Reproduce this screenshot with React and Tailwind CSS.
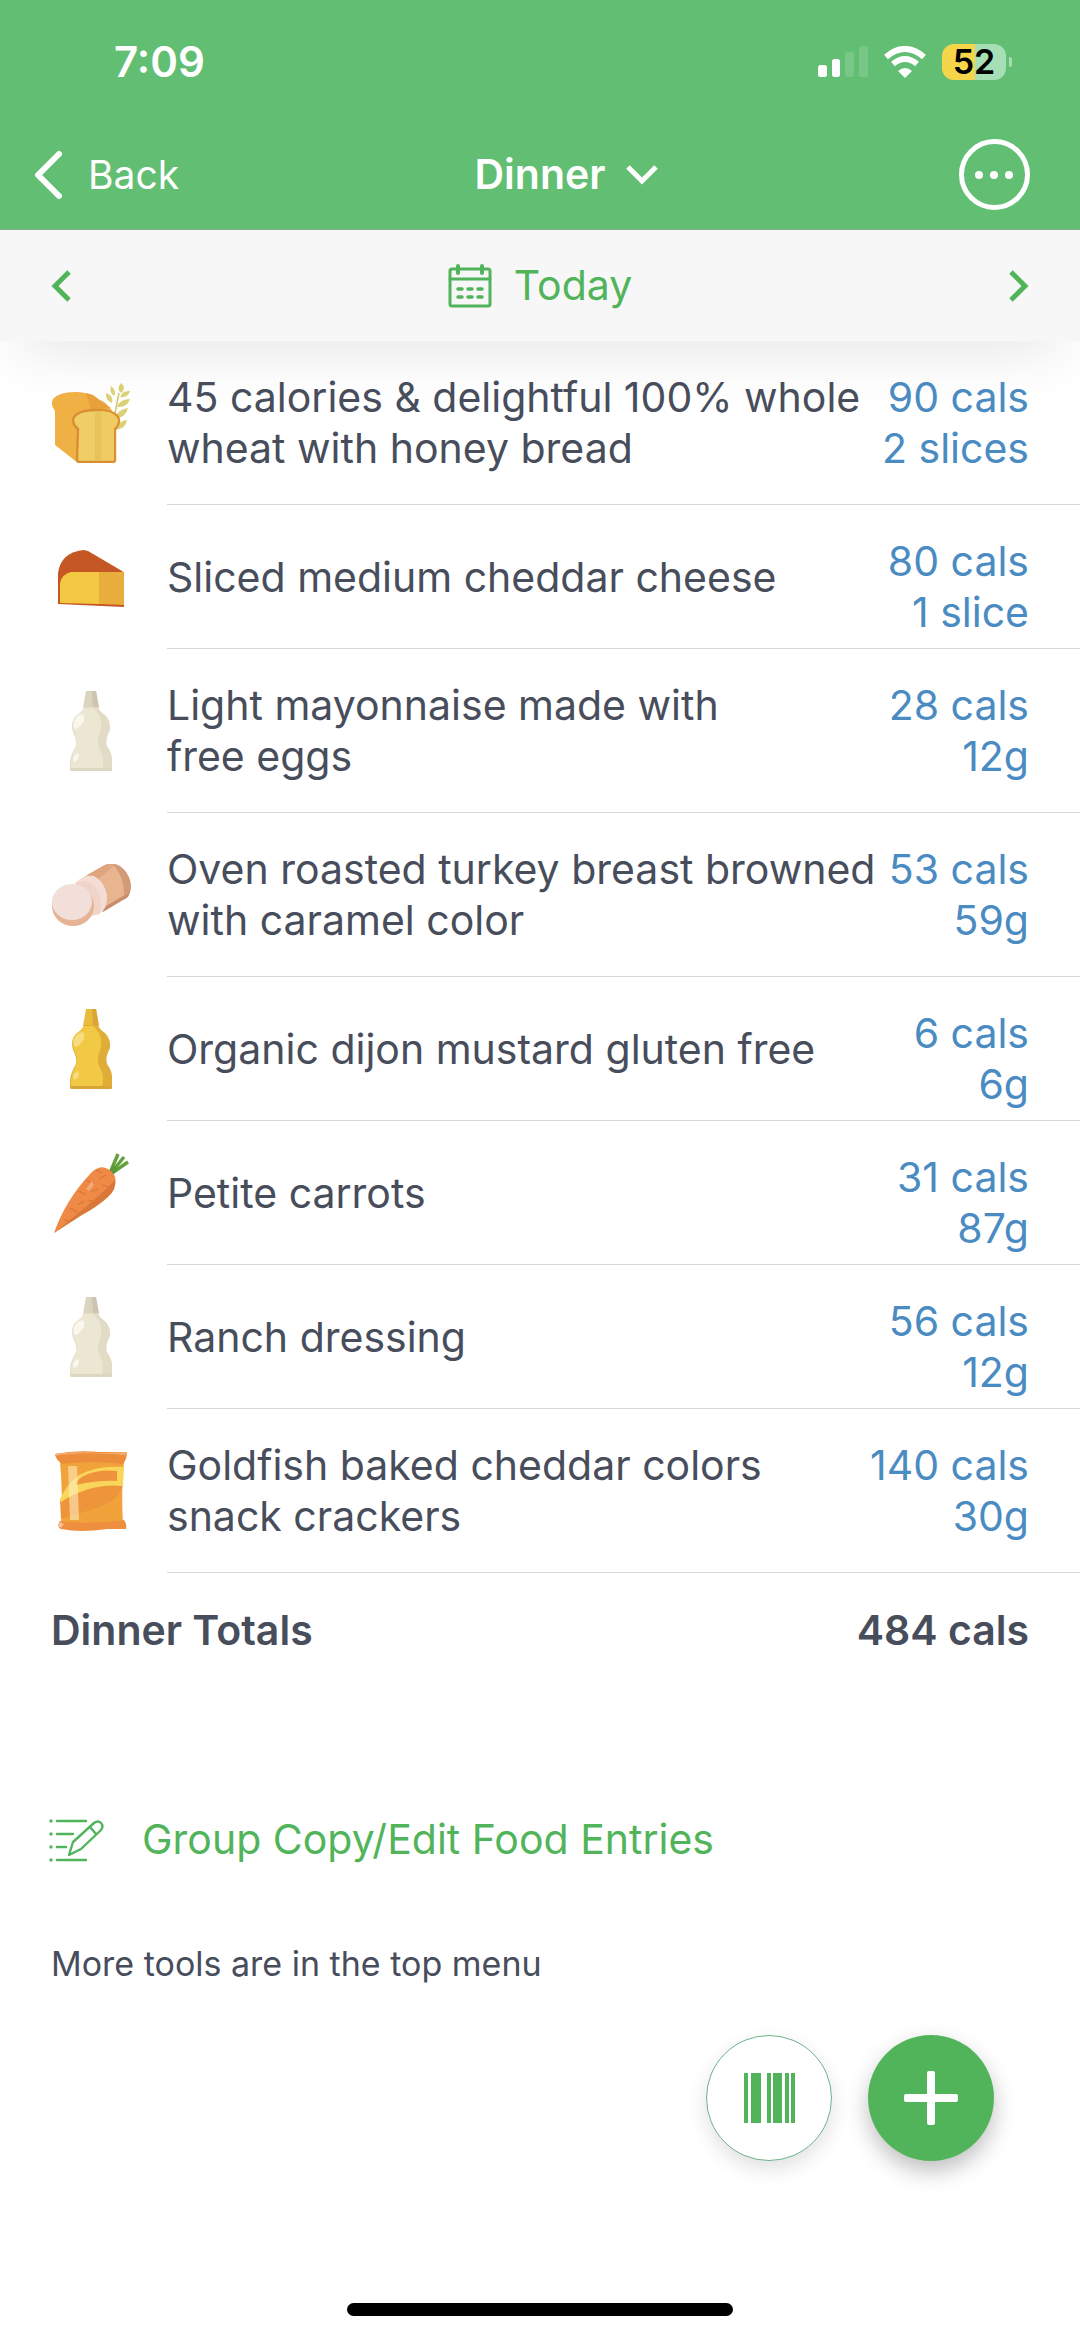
import React from 'react';

const BreadIcon = () => (
  <svg viewBox="0 0 80 80" className="w-20 h-20" aria-hidden="true">
    <path d="M62 40 L68 10" stroke="#cfc56a" strokeWidth="1.5" />
    <g fill="#dcd077">
      <path d="M70 0 Q76 5 70 10 Q65 6 70 0Z" />
      <path d="M60 3 Q66 8 63 13 Q58 9 60 3Z" />
      <path d="M69 14 Q72 7 79 8 Q77 15 69 14Z" />
      <path d="M55 10 Q63 13 61 20 Q54 17 55 10Z" />
      <path d="M66 24 Q69 16 79 16 Q76 25 66 24Z" />
      <path d="M50 17 Q58 20 59 30 Q49 27 50 17Z" />
      <path d="M64 35 Q67 26 77 25 Q75 35 64 35Z" />
      <path d="M65 47 Q68 37 76 37 Q75 45 65 47Z" />
    </g>
    <path d="M4 28 Q-1 22 2 16 Q8 9 24 9 Q36 9 44 14 L60 26 L66 36 L60 78 L27 80 L4 62Z" fill="#efb044" />
    <path d="M35 10 Q42 11 46 15 L60 25 L40 27Z" fill="#e8a03a" />
    <path d="M27 46 Q20 40 23 34 Q28 27 45 27 Q62 27 67 34 Q70 40 64 46 L64 77 Q64 79 62 79 L29 79 Q26 79 26 77Z" fill="#efce68" stroke="#da8f32" strokeWidth="2.4" />
    <path d="M44 28 H50 V78 H44Z" fill="#e9c25b" />
    <path d="M50 28 Q62 28 66 35 Q68 40 63 45 L63 77 L50 77Z" fill="#f0cb62" />
  </svg>
);

const CheeseIcon = () => (
  <svg viewBox="0 0 80 80" className="w-20 h-20" aria-hidden="true">
    <path d="M7 67 V36 Q10 15 33 13 L37 14 L71 34 L73 36 V70Z" fill="#c45723" />
    <path d="M9 66 V46 Q11 37 20 35 L48 35 V67Z" fill="#f4c843" />
    <path d="M48 35 H73 V68 L48 67Z" fill="#e9ad3e" />
  </svg>
);

const BottleIcon = ({ cap, capShade, body, shade, base, shine }) => (
  <svg viewBox="0 0 80 80" className="w-20 h-20" aria-hidden="true">
    <path d="M35 0 H45 L48 17 H32Z" fill={cap} />
    <path d="M41 0 H45 L48 17 H42Z" fill={capShade} />
    <path d="M33 16 H47 Q48 20 54 24 Q60 30 59 39 Q54 48 56 55 Q62 63 61 71 V78 Q61 80 59 80 H21 Q19 80 19 78 V71 Q20 63 25 55 Q26 48 22 41 Q19 31 25 25 Q32 20 33 16Z" fill={shade} />
    <path d="M33 17 H42 Q48 22 50 30 Q51 38 47 47 Q46 54 51 63 Q53 71 51 78 H20 V71 Q21 63 25 56 Q27 48 23 41 Q19 31 25 25 Q32 20 33 17Z" fill={body} />
    <path d="M19 77 H61 V79 Q61 80 59 80 H21 Q19 80 19 78Z" fill={base} />
    <path d="M24 38 Q20 32 26 26 Q30 22 33 24 Q34 30 30 34 Q27 38 24 38Z" fill={shine} />
    <path d="M22 69 Q22 64 27 62 Q29 66 26 69 Q24 72 22 69Z" fill={shine} />
  </svg>
);

const CreamBottle = () => (
  <BottleIcon cap="#dbd4c0" capShade="#cdc5b0" body="#ece7d3" shade="#e2dcc7" base="#ddd6c0" shine="#f9f7ee" />
);

const MustardBottle = () => (
  <BottleIcon cap="#e9bb3c" capShade="#daa536" body="#f2c945" shade="#e0ad38" base="#d9a636" shine="#f8dc83" />
);

const TurkeyIcon = () => (
  <svg viewBox="0 0 80 80" className="w-20 h-20" aria-hidden="true">
    <path d="M30 24 L54 10 Q66 6 75 17 Q83 29 78 40 Q77 43 72 45 L52 57Z" fill="#c98d6b" />
    <path d="M30 24 L54 10 Q66 6 74 17 Q81 29 77 38 L55 51Z" fill="#e9b590" />
    <path d="M36 20 L54 10 Q60 8 64 10 L48 24Z" fill="#dfa580" />
    <path d="M62 9 Q70 9 75 18 Q80 27 78 37 L73 40 Q74 24 62 9Z" fill="#d39a77" />
    <path d="M24 28 Q33 19 43 21 Q53 26 56 40 Q57 54 48 59 L40 60Z" fill="#f3ddd4" />
    <path d="M24 28 Q35 22 45 33 Q52 44 49 59 L40 61Z" fill="#f0d4c9" />
    <ellipse cx="22" cy="51" rx="21" ry="20" fill="#e6b395" />
    <ellipse cx="21" cy="47" rx="20" ry="18" fill="#f2dfda" />
  </svg>
);

const CarrotIcon = () => (
  <svg viewBox="0 0 80 80" className="w-20 h-20" aria-hidden="true">
    <g stroke="#62a13c" strokeWidth="3.4" fill="none">
      <path d="M59 20 L67 1" />
      <path d="M60 20 L73 4" />
      <path d="M61 20 L77 9" />
    </g>
    <path d="M57 20 L62 12 L67 16 L61 23Z" fill="#5b983a" />
    <path d="M3 80 Q14 48 39 21 Q48 11 57 16 Q68 23 63 34 Q55 48 31 61Z" fill="#ee8a45" />
    <path d="M3 80 L31 57 Q53 39 64 27 Q66 36 57 44 Q46 54 31 62Z" fill="#d97838" />
    <g stroke="#d67636" strokeWidth="1.2" fill="none">
      <path d="M45 17 L51 20" />
      <path d="M48 26 L55 22" />
      <path d="M35 27 L43 31" />
      <path d="M51 32 L58 34" />
      <path d="M40 39 L47 36" />
      <path d="M28 38 L35 42" />
      <path d="M37 47 L43 49" />
      <path d="M27 52 L33 48" />
      <path d="M19 55 L26 59" />
      <path d="M13 67 L18 68" />
    </g>
    <path d="M35 36 L41 28 L43 32 L38 38Z" fill="#f4aa78" />
  </svg>
);

const CrackersIcon = () => (
  <svg viewBox="0 0 80 80" className="w-20 h-20" aria-hidden="true">
    <path d="M9 10 H73 Q70 40 72 74 H10 Q12 44 9 10Z" fill="#f1a23a" />
    <path d="M9 48 Q35 30 72 34 Q66 50 48 56 Q30 62 10 68Z" fill="#ee943b" />
    <path d="M9 49 Q13 36 28 24 Q46 14 73 16 L72 35 Q40 32 10 51Z" fill="#f9d65a" />
    <path d="M25 34 Q25 28 37 23 Q50 18 66 20 V30 Q48 29 25 34Z" fill="#ee923c" />
    <path d="M17 15 H26 L28 69 H19Z" fill="#fff3c8" opacity="0.55" />
    <path d="M4 3 Q24 -1 48 1 L76 1 Q76 8 72 13 Q40 9 12 13 Q5 10 4 3Z" fill="#ec8d3b" />
    <path d="M4 3 Q24 0 48 2 L76 1 L75 4 Q30 0 4 5Z" fill="#f4ad70" />
    <path d="M9 70 Q40 74 73 69 Q76 73 75 78 L56 78 Q30 82 10 78 Q5 76 9 70Z" fill="#ed8f3e" />
    <path d="M9 71 Q5 75 10 77 L13 73Z" fill="#f7c092" />
  </svg>
);

const entries = [
  { id: 1, name: '45 calories & delightful 100% whole wheat with honey bread', cals: '90 cals', amount: '2 slices', Icon: BreadIcon },
  { id: 2, name: 'Sliced medium cheddar cheese', cals: '80 cals', amount: '1 slice', Icon: CheeseIcon },
  { id: 3, name: 'Light mayonnaise made with free\u00a0eggs', cals: '28 cals', amount: '12g', Icon: CreamBottle },
  { id: 4, name: 'Oven roasted turkey breast browned with caramel color', cals: '53 cals', amount: '59g', Icon: TurkeyIcon },
  { id: 5, name: 'Organic dijon mustard gluten free', cals: '6 cals', amount: '6g', Icon: MustardBottle },
  { id: 6, name: 'Petite carrots', cals: '31 cals', amount: '87g', Icon: CarrotIcon },
  { id: 7, name: 'Ranch dressing', cals: '56 cals', amount: '12g', Icon: CreamBottle },
  { id: 8, name: 'Goldfish baked cheddar colors snack crackers', cals: '140 cals', amount: '30g', Icon: CrackersIcon },
];

const StatusBar = () => (
  <div className="flex items-center justify-between h-[124px] pl-[114px] pr-[68px]">
    <span className="text-[42px] leading-[50px] font-semibold">7:09</span>
    <div className="flex items-center gap-4">
      <svg viewBox="0 0 50 32" className="w-[50px] h-8" fill="#fff" aria-hidden="true">
        <rect x="0" y="19" width="9" height="12" rx="2.5" />
        <rect x="14" y="13" width="8" height="18" rx="2.5" />
        <rect x="27" y="6" width="9" height="25" rx="2.5" opacity="0.15" />
        <rect x="41" y="0" width="9" height="31" rx="2.5" opacity="0.15" />
      </svg>
      <svg viewBox="0 0 42 32" className="w-[42px] h-8" fill="none" stroke="#fff" strokeWidth="6" aria-hidden="true">
        <path d="M2 11 Q21 -5 40 11" />
        <path d="M9 18 Q21 8 33 18" />
        <path d="M21 32 L14 25 Q21 19 28 25Z" fill="#fff" stroke="none" />
      </svg>
      <div className="flex items-center gap-[3px]">
        <div className="flex items-center justify-center w-16 h-9 rounded-xl text-black text-[34px] leading-9 font-semibold bg-linear-to-r from-[#f6d54a] from-52% to-[#a6dfb5] to-52%">
          52
        </div>
        <div className="w-[3px] h-[10px] rounded-r-full bg-[#a6dfb5]" />
      </div>
    </div>
  </div>
);

const NavBar = () => (
  <div className="grid grid-cols-3 items-center h-[105px] px-[50px] pb-1">
    <button className="flex items-center gap-[26px] justify-self-start -ml-4 text-[39px] leading-[50px]">
      <svg viewBox="0 0 28 50" className="w-7 h-[50px]" fill="none" stroke="#fff" strokeWidth="6" strokeLinecap="round" strokeLinejoin="round" aria-hidden="true">
        <path d="M25 4 L4 25 L25 46" />
      </svg>
      Back
    </button>
    <button className="flex items-center gap-5 justify-self-center pl-[52px] text-[41px] leading-[51px] font-semibold">
      Dinner
      <svg viewBox="0 0 32 20" className="w-8 h-5" fill="none" stroke="#fff" strokeWidth="5" aria-hidden="true">
        <path d="M2 2 L16 16 L30 2" />
      </svg>
    </button>
    <button aria-label="More options" className="flex items-center justify-center gap-[7px] justify-self-end w-[71px] h-[71px] rounded-full border-[5px] border-white">
      <span className="w-2 h-2 rounded-full bg-white" />
      <span className="w-2 h-2 rounded-full bg-white" />
      <span className="w-2 h-2 rounded-full bg-white" />
    </button>
  </div>
);

const DateBar = () => (
  <div className="flex items-center justify-between h-[111px] px-[51px] bg-[#f7f7f7] text-[#52b45a] shadow-[0_30px_60px_-20px_rgba(0,0,0,0.1)]">
    <button aria-label="Previous day">
      <svg viewBox="0 0 20 32" className="w-5 h-8" fill="none" stroke="currentColor" strokeWidth="5" aria-hidden="true">
        <path d="M18 2 L4 16 L18 30" />
      </svg>
    </button>
    <button className="flex items-center gap-[22px] text-[41px] leading-[51px]">
      <svg viewBox="0 0 44 44" className="w-11 h-11" fill="none" stroke="currentColor" strokeWidth="3" strokeLinecap="round" aria-hidden="true">
        <rect x="2" y="5" width="40" height="37" rx="2" />
        <path d="M2 15 H42" />
        <path d="M10 2 V9 M34 2 V9" strokeWidth="4" />
        <path d="M10 25 H14 M20 25 H24 M30 25 H34 M10 33 H14 M20 33 H24 M30 33 H34" strokeWidth="3.5" />
      </svg>
      Today
    </button>
    <button aria-label="Next day">
      <svg viewBox="0 0 20 32" className="w-5 h-8" fill="none" stroke="currentColor" strokeWidth="5" aria-hidden="true">
        <path d="M2 2 L16 16 L2 30" />
      </svg>
    </button>
  </div>
);

const EntryRow = ({ entry }) => {
  const { Icon } = entry;
  return (
    <li className="flex items-center pl-[51px]">
      <Icon />
      <div className="flex items-center flex-1 min-h-36 ml-9 pr-[51px] border-b border-[#d6d6d8]">
        <p className="flex-1 pt-[31px] pb-[30px]">{entry.name}</p>
        <p className="self-start shrink-0 pt-[31px] text-right text-[#4a8bc2]">
          {entry.cals}
          <br />
          {entry.amount}
        </p>
      </div>
    </li>
  );
};

const App = () => {
  return (
    <div className="flex flex-col min-h-screen bg-white text-[#484d5c] font-['Inter','Liberation_Sans',sans-serif]">
      <header>
        <div className="bg-[#62be73] text-white border-b border-[#7fb08a]">
          <StatusBar />
          <NavBar />
        </div>
        <DateBar />
      </header>

      <main>
        <ul className="text-[41px] leading-[51px]">
          {entries.map(entry => (
            <EntryRow key={entry.id} entry={entry} />
          ))}
        </ul>

        <div className="flex justify-between px-[51px] pt-8 text-[41px] leading-[51px] font-semibold">
          <span>Dinner Totals</span>
          <span>484 cals</span>
        </div>

        {/* Tools */}
        <button className="flex items-center gap-[37px] mt-[158px] ml-[49px] text-[41px] leading-[51px] text-[#52b45a]">
          <svg viewBox="0 0 56 44" className="w-14 h-11" fill="none" stroke="currentColor" strokeWidth="2.4" strokeLinecap="round" strokeLinejoin="round" aria-hidden="true">
            <path d="M8 3 H37 M8 16 H24 M8 29 H17 M8 42 H37" />
            <path d="M2 3 V3 M2 16 V16 M2 29 V29 M2 42 V42" strokeWidth="3.4" />
            <path d="M20 37 L24 24 L45 5 Q49 2 52 5 Q55 8 52 12 L32 31 Z" />
            <path d="M41 9 L47 16" />
          </svg>
          Group Copy/Edit Food Entries
        </button>
        <p className="mt-[78px] px-[51px] text-[34px] leading-[42px]">More tools are in the top menu</p>
      </main>

      <div className="flex justify-end gap-9 mt-[50px] pr-[86px]">
        <button aria-label="Scan barcode" className="flex items-center justify-center w-[126px] h-[126px] rounded-full bg-white border border-[#6db48a] shadow-[0_8px_20px_rgba(0,0,0,0.12)]">
          <svg viewBox="0 0 51 50" className="w-[51px] h-[50px]" fill="#52b45a" aria-hidden="true">
            <rect x="0" width="4" height="50" />
            <rect x="7" width="10" height="50" />
            <rect x="23" width="4" height="50" />
            <rect x="29" width="9" height="50" />
            <rect x="41" width="4" height="50" />
            <rect x="47" width="4" height="50" />
          </svg>
        </button>
        <button aria-label="Add food" className="flex items-center justify-center w-[126px] h-[126px] rounded-full bg-[#52b45a] shadow-[0_10px_22px_rgba(0,0,0,0.25)]">
          <svg viewBox="0 0 54 54" className="w-[54px] h-[54px]" fill="#fff" aria-hidden="true">
            <rect x="0" y="23" width="54" height="8" rx="2" />
            <rect x="23" y="0" width="8" height="54" rx="2" />
          </svg>
        </button>
      </div>

      <div className="self-center w-[386px] h-[13px] mt-auto mb-5 rounded-full bg-black" />
    </div>
  );
};

export default App;
